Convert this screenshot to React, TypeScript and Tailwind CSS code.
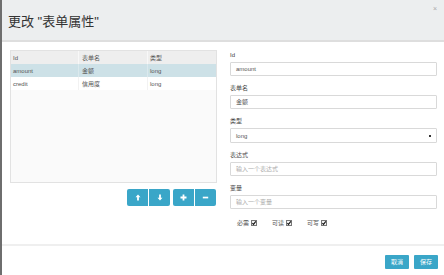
import React from "react";

const font = { fontFamily: '"Liberation Sans", "Noto Sans CJK SC", sans-serif' };

function Field({ label, children }: { label: string; children: React.ReactNode }) {
  return (
    <div className="flex flex-col">
      <div className="h-[8px] text-[6px] leading-[8px] text-[#444]">{label}</div>
      <div className="mt-[3px]">{children}</div>
    </div>
  );
}

function Input({ value, placeholder }: { value?: string; placeholder?: string }) {
  return (
    <div className="h-[14px] border border-[#d9d9d9] rounded-[1px] bg-white flex items-center px-[5px] text-[6px] leading-[8px]">
      {value ? <span className="text-[#555]">{value}</span> : <span className="text-[#aaa]">{placeholder}</span>}
    </div>
  );
}

function Check({ label }: { label: string }) {
  return (
    <div className="flex items-center gap-[2px] text-[6px] leading-[8px] text-[#555]">
      <span>{label}</span>
      <svg width="6" height="6" viewBox="0 0 6 6">
        <rect x="0.5" y="0.5" width="5" height="5" fill="#f4f4f4" stroke="#777" strokeWidth="1" />
        <path d="M1.4 3.1 L2.5 4.3 L4.8 1.4" stroke="#111" strokeWidth="1.1" fill="none" />
      </svg>
    </div>
  );
}

function IconBtn({ children, cls }: { children: React.ReactNode; cls: string }) {
  return (
    <div className={"w-[21px] h-[17px] bg-[#3aa6c8] flex items-center justify-center " + cls}>
      {children}
    </div>
  );
}

export default function App() {
  return (
    <div style={font} className="w-[444px] h-[275px] bg-white border-l-2 border-[#6e6e6e] flex flex-col overflow-hidden">
      <div className="h-[42px] shrink-0 bg-[#eceeef] border-b-2 border-[#dedede] relative flex items-center pl-[6px]">
        <span className="text-[13px] leading-[16px] text-[#333] mt-[4px]">更改 "表单属性"</span>
        <span className="absolute right-[7px] top-[4px] text-[7px] text-[#aaa]">×</span>
      </div>
      <div className="h-[204px] shrink-0 flex border-b-2 border-[#efefef]">
        <div className="pl-[8px] pt-[8px] w-[218px] flex flex-col">
          <div className="w-[207px] h-[133px] border border-[#e2e2e2] bg-[#fafafa] text-[6px] leading-[8px] text-[#555]">
            <div className="flex h-[13px] bg-[#eeeeee] items-center">
              <div className="w-[68px] pl-[2px] h-full flex items-center border-r border-[#f8f8f8]">Id</div>
              <div className="w-[69px] pl-[3px] h-full flex items-center border-r border-[#f8f8f8]">表单名</div>
              <div className="flex-1 pl-[2px]">类型</div>
            </div>
            <div className="flex h-[13px] bg-[#cde1e7] items-center">
              <div className="w-[68px] pl-[2px] h-full flex items-center border-r border-[#dbe9ed]">amount</div>
              <div className="w-[69px] pl-[3px] h-full flex items-center border-r border-[#dbe9ed]">金额</div>
              <div className="flex-1 pl-[2px]">long</div>
            </div>
            <div className="flex h-[13px] bg-white items-center">
              <div className="w-[68px] pl-[2px] h-full flex items-center border-r border-[#f2f2f2]">credit</div>
              <div className="w-[69px] pl-[3px] h-full flex items-center border-r border-[#f2f2f2]">信用度</div>
              <div className="flex-1 pl-[2px]">long</div>
            </div>
          </div>
          <div className="mt-[6px] w-[207px] flex justify-end gap-[3px] pr-[1px]">
            <div className="flex gap-[1px]">
              <IconBtn cls="rounded-l-[2px]">
                <svg width="6" height="7" viewBox="0 0 6 7"><path d="M3 0.5 L5.5 3.2 H3.9 V6.5 H2.1 V3.2 H0.5 Z" fill="white" /></svg>
              </IconBtn>
              <IconBtn cls="rounded-r-[2px]">
                <svg width="6" height="7" viewBox="0 0 6 7"><path d="M3 6.5 L5.5 3.8 H3.9 V0.5 H2.1 V3.8 H0.5 Z" fill="white" /></svg>
              </IconBtn>
            </div>
            <div className="flex gap-[1px]">
              <IconBtn cls="rounded-l-[2px]">
                <svg width="7" height="7" viewBox="0 0 7 7"><path d="M2.6 0.5 H4.4 V2.6 H6.5 V4.4 H4.4 V6.5 H2.6 V4.4 H0.5 V2.6 H2.6 Z" fill="white" /></svg>
              </IconBtn>
              <IconBtn cls="rounded-r-[2px]">
                <svg width="7" height="7" viewBox="0 0 7 7"><rect x="0.8" y="2.7" width="5.4" height="1.7" fill="white" /></svg>
              </IconBtn>
            </div>
          </div>
        </div>
        <div className="ml-[10px] w-[207px] pt-[9px] flex flex-col gap-[8px]">
          <Field label="Id"><Input value="amount" /></Field>
          <Field label="表单名"><Input value="金额" /></Field>
          <Field label="类型">
            <div className="h-[15px] border border-[#d9d9d9] rounded-[1px] bg-white flex items-center justify-between px-[5px] text-[6px] leading-[8px] text-[#555]">
              <span>long</span>
              <span className="w-[2px] h-[2px] bg-[#333]" />
            </div>
          </Field>
          <Field label="表达式"><Input placeholder="输入一个表达式" /></Field>
          <Field label="变量"><Input placeholder="输入一个变量" /></Field>
          <div className="flex items-center pl-[7px] gap-[15px] mt-[2px]">
            <Check label="必需" />
            <Check label="可读" />
            <Check label="可写" />
          </div>
        </div>
      </div>
      <div className="flex-1 flex justify-end items-start pt-[9px] pr-[6px] gap-[5px]">
        <div className="w-[24px] h-[14px] bg-[#3aa6c8] text-white text-[6px] leading-[8px] flex items-center justify-center rounded-[1px]">取消</div>
        <div className="w-[24px] h-[14px] bg-[#3aa6c8] text-white text-[6px] leading-[8px] flex items-center justify-center rounded-[1px]">保存</div>
      </div>
    </div>
  );
}
